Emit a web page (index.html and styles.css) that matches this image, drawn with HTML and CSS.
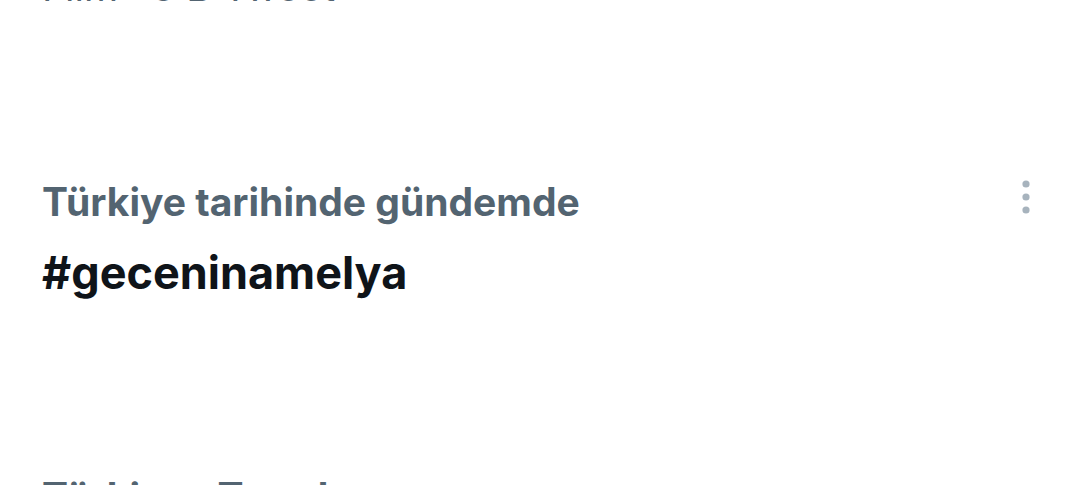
FILE: index.html
```html
<!DOCTYPE html>
<html lang="tr">
<head>
<meta charset="utf-8">
<title>Gündem</title>
<link rel="stylesheet" href="styles.css">
</head>
<body>
<main class="list">
  <section class="trend">
    <div class="trend-text">
      <div class="context">Türkiye tarihinde gündemde</div>
      <div class="title">#gündem</div>
      <div class="count">Film · 8 B Tweet</div>
    </div>
    <button class="more" aria-label="Daha fazla">
      <svg viewBox="0 0 8 34" width="8" height="34"><circle cx="4" cy="4" r="3.6"/><circle cx="4" cy="17" r="3.6"/><circle cx="4" cy="30" r="3.6"/></svg>
    </button>
  </section>
  <section class="trend">
    <div class="trend-text">
      <div class="context">Türkiye tarihinde gündemde</div>
      <div class="title">#geceninamelya</div>
    </div>
    <button class="more" aria-label="Daha fazla">
      <svg viewBox="0 0 8 34" width="8" height="34"><circle cx="4" cy="4" r="3.6"/><circle cx="4" cy="17" r="3.6"/><circle cx="4" cy="30" r="3.6"/></svg>
    </button>
  </section>
  <section class="trend">
    <div class="trend-text">
      <div class="context">Türkiye · Trend</div>
      <div class="title">#gündem</div>
    </div>
  </section>
</main>
</body>
</html>
```
FILE: styles.css
```css
html, body {
  margin: 0;
  padding: 0;
  background: #ffffff;
  overflow: hidden;
  height: 485px;
}
body {
  font-family: "Inter", "Roboto", sans-serif;
}
.list {
  display: flex;
  flex-direction: column;
  margin-top: -258px;
}
.trend {
  padding: 84px 49px 88px 42px;
  display: flex;
  align-items: flex-start;
  justify-content: space-between;
}
.trend-text {
  display: flex;
  flex-direction: column;
  gap: 19px;
}
.context {
  color: #536471;
  font-size: 39px;
  font-weight: 700;
  line-height: 48px;
}
.title {
  color: #0f1419;
  font-size: 45px;
  font-weight: 700;
  line-height: 56px;
}
.count {
  color: #536471;
  font-size: 39px;
  font-weight: 400;
  line-height: 38px;
}
.more {
  margin-top: 2px;
  border: 0;
  background: none;
  padding: 0;
  display: flex;
}
.more svg {
  fill: #a7b3bd;
}
```
